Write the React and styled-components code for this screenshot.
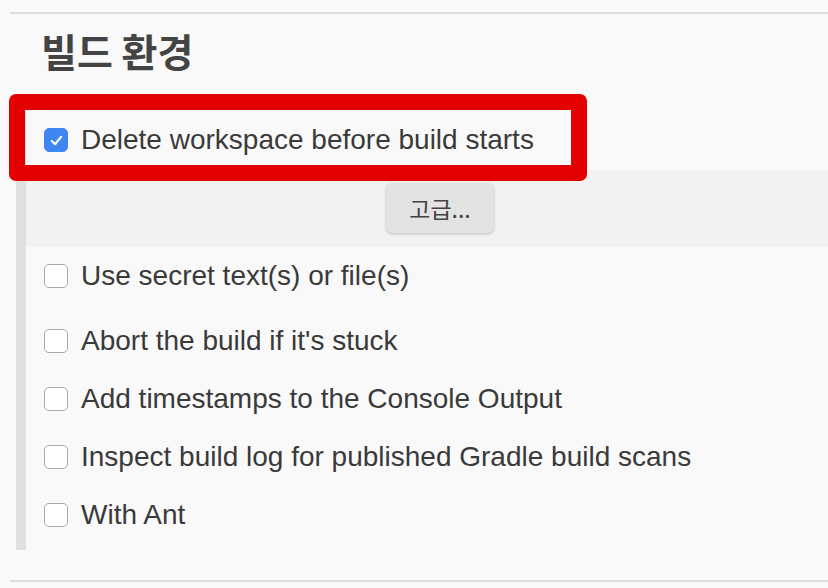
import React from 'react'
import styled, { createGlobalStyle } from 'styled-components'

const Global = createGlobalStyle`
  html, body {
    margin: 0;
    padding: 0;
    background: #f9f9f9;
  }
  body {
    font-family: "Liberation Sans", "Noto Sans CJK KR", Arial, sans-serif;
    color: #333;
  }
`

const Page = styled.div`
  position: relative;
  width: 828px;
  height: 588px;
  overflow: hidden;
  padding-top: 12px;
  box-sizing: border-box;
`

const Section = styled.section`
  margin-left: 10px;
  border-top: 2px solid #dcdcdc;
  border-bottom: 2px solid #dcdcdc;
  padding-bottom: 30px;
`

const Title = styled.h2`
  margin: 0;
  padding: 12px 0 0 31px;
  height: 96px;
  box-sizing: border-box;
  font-family: "Noto Sans CJK KR", "Liberation Sans", sans-serif;
  font-size: 39px;
  font-weight: 700;
  line-height: 48px;
  color: #444;
`

const Group = styled.div`
  margin-left: 6px;
  border-left: 10px solid #e0e0e0;
  padding-bottom: 6px;
`

const Row = styled.label`
  display: flex;
  align-items: center;
  gap: 13px;
  height: ${p => p.$h || 58}px;
  margin-top: ${p => p.$top || 0}px;
  padding-left: 18px;
  font-size: 28px;
  color: #3a3a3a;
  box-sizing: border-box;
`

const Box = styled.span`
  display: inline-flex;
  align-items: center;
  justify-content: center;
  width: 24px;
  height: 24px;
  box-sizing: border-box;
  border-radius: 5px;
  flex-shrink: 0;
  background: ${p => (p.$checked ? '#3f86f2' : '#fff')};
  border: 1.5px solid ${p => (p.$checked ? '#3f86f2' : '#a9a9a9')};
`

const Advanced = styled.div`
  display: flex;
  height: 77px;
  background: #f2f2f2;
  padding: 13px 0 0 360px;
  box-sizing: border-box;
`

const Button = styled.button`
  width: 108px;
  height: 50px;
  border: none;
  border-radius: 6px;
  background: #e3e3e3;
  box-shadow: 0 1px 3px rgba(0, 0, 0, 0.22);
  font-family: "Noto Sans CJK KR", "Liberation Sans", sans-serif;
  font-size: 23px;
  color: #444;
  padding: 0;
`

const Highlight = styled.div`
  position: absolute;
  left: 9px;
  top: 94px;
  width: 578px;
  height: 87px;
  box-sizing: border-box;
  border: 16px solid #e30000;
  border-radius: 7px;
  pointer-events: none;
`

const Check = ({ checked }) => (
  <Box $checked={checked}>
    {checked && (
      <svg width="15" height="15" viewBox="0 0 16 16">
        <path d="M3 8.5 L6.5 12 L13 4" fill="none" stroke="#fff" strokeWidth="2.2" strokeLinecap="round" strokeLinejoin="round" />
      </svg>
    )}
  </Box>
)

const options = [
  { label: 'Use secret text(s) or file(s)', top: 0 },
  { label: "Abort the build if it's stuck", top: 7 },
  { label: 'Add timestamps to the Console Output', top: 0 },
  { label: 'Inspect build log for published Gradle build scans', top: 0 },
  { label: 'With Ant', top: 0 },
]

export default function App() {
  return (
    <Page>
      <Global />
      <Section>
        <Title>빌드 환경</Title>
        <Group>
          <Row $h={60}>
            <Check checked />
            Delete workspace before build starts
          </Row>
          <Advanced>
            <Button>고급...</Button>
          </Advanced>
          {options.map(o => (
            <Row key={o.label} $top={o.top}>
              <Check />
              {o.label}
            </Row>
          ))}
        </Group>
      </Section>
      <Highlight />
    </Page>
  )
}
